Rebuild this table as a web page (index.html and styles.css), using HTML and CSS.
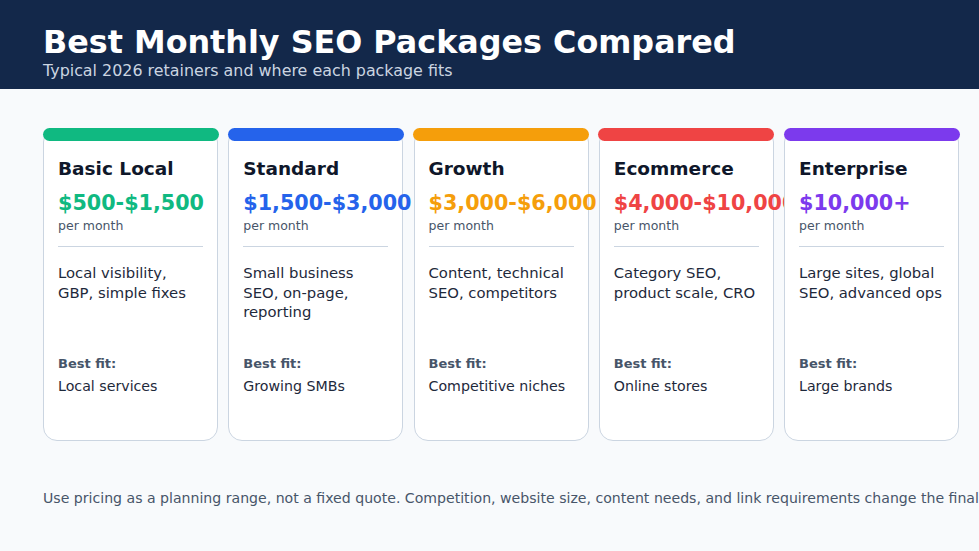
FILE: index.html
```html
<!DOCTYPE html>
<html lang="en">
<head>
<meta charset="utf-8">
<title>Best Monthly SEO Packages Compared</title>
<link rel="stylesheet" href="styles.css">
</head>
<body>
<header class="hero">
  <h1 class="hero-title">Best Monthly SEO Packages Compared</h1>
  <p class="hero-sub">Typical 2026 retainers and where each package fits</p>
</header>
<main class="content">
  <section class="cards">
    <article class="card card-green">
      <div class="card-bar"></div>
      <h2 class="card-title">Basic Local</h2>
      <div class="card-price">$500-$1,500</div>
      <div class="card-period">per month</div>
      <hr class="card-rule">
      <p class="card-desc">Local visibility,<br>GBP, simple fixes</p>
      <div class="card-fit-label">Best fit:</div>
      <div class="card-fit">Local services</div>
    </article>
    <article class="card card-blue">
      <div class="card-bar"></div>
      <h2 class="card-title">Standard</h2>
      <div class="card-price">$1,500-$3,000</div>
      <div class="card-period">per month</div>
      <hr class="card-rule">
      <p class="card-desc">Small business<br>SEO, on-page,<br>reporting</p>
      <div class="card-fit-label">Best fit:</div>
      <div class="card-fit">Growing SMBs</div>
    </article>
    <article class="card card-orange">
      <div class="card-bar"></div>
      <h2 class="card-title">Growth</h2>
      <div class="card-price">$3,000-$6,000</div>
      <div class="card-period">per month</div>
      <hr class="card-rule">
      <p class="card-desc">Content, technical<br>SEO, competitors</p>
      <div class="card-fit-label">Best fit:</div>
      <div class="card-fit">Competitive niches</div>
    </article>
    <article class="card card-red">
      <div class="card-bar"></div>
      <h2 class="card-title">Ecommerce</h2>
      <div class="card-price">$4,000-$10,000</div>
      <div class="card-period">per month</div>
      <hr class="card-rule">
      <p class="card-desc">Category SEO,<br>product scale, CRO</p>
      <div class="card-fit-label">Best fit:</div>
      <div class="card-fit">Online stores</div>
    </article>
    <article class="card card-purple">
      <div class="card-bar"></div>
      <h2 class="card-title">Enterprise</h2>
      <div class="card-price">$10,000+</div>
      <div class="card-period">per month</div>
      <hr class="card-rule">
      <p class="card-desc">Large sites, global<br>SEO, advanced ops</p>
      <div class="card-fit-label">Best fit:</div>
      <div class="card-fit">Large brands</div>
    </article>
  </section>
  <p class="note">Use pricing as a planning range, not a fixed quote. Competition, website size, content needs, and link requirements change the final quote.</p>
</main>
</body>
</html>
```

FILE: styles.css
```css
html, body {
  margin: 0;
  padding: 0;
  overflow: hidden;
  width: 979px;
  height: 551px;
}
body {
  background: #f8fafc;
  font-family: "DejaVu Sans", "Noto Sans", sans-serif;
  color: #0f172a;
}
.hero {
  background: #13284a;
  height: 89px;
  box-sizing: border-box;
  padding: 23px 43px 0;
}
.hero-title {
  margin: 0;
  font-size: 31.8px;
  line-height: 38px;
  font-weight: bold;
  color: #ffffff;
  white-space: nowrap;
}
.hero-sub {
  margin: 0;
  font-size: 15.9px;
  line-height: 20px;
  color: #cbd5e1;
  white-space: nowrap;
}
.content {
  padding: 39px 0 0 43px;
}
.cards {
  display: grid;
  grid-template-columns: repeat(5, 175px);
  column-gap: 10.25px;
}
.card {
  position: relative;
  height: 313px;
  box-sizing: border-box;
  background: #ffffff;
  border: 1.5px solid #cbd5e1;
  border-radius: 14px;
  padding: 0 14px;
}
.card-bar {
  margin: -1.5px -15.5px 0;
  height: 13px;
  border-radius: 7px;
}
.card-green .card-bar { background: #10b981; }
.card-blue .card-bar { background: #2563eb; }
.card-orange .card-bar { background: #f59e0b; }
.card-red .card-bar { background: #ef4444; }
.card-purple .card-bar { background: #7c3aed; }
.card-green .card-price { color: #10b981; }
.card-blue .card-price { color: #2563eb; }
.card-orange .card-price { color: #f59e0b; }
.card-red .card-price { color: #ef4444; }
.card-purple .card-price { color: #7c3aed; }
.card-title {
  margin: 16px 0 0;
  font-size: 18.5px;
  line-height: 24px;
  font-weight: bold;
  color: #0f172a;
  white-space: nowrap;
}
.card-price {
  margin-top: 9px;
  font-size: 20.7px;
  line-height: 26px;
  font-weight: bold;
  white-space: nowrap;
}
.card-period {
  margin-top: 2px;
  font-size: 12.5px;
  line-height: 16px;
  color: #475569;
}
.card-rule {
  margin: 12px 0 0;
  border: 0;
  height: 1.5px;
  background: #cbd5e1;
}
.card-desc {
  margin: 16px 0 0;
  height: 92.5px;
  font-size: 14.8px;
  line-height: 19.5px;
  color: #1e293b;
  white-space: nowrap;
}
.card-fit-label {
  font-size: 13px;
  line-height: 16px;
  font-weight: bold;
  color: #475569;
}
.card-fit {
  margin-top: 4px;
  font-size: 14.2px;
  line-height: 20px;
  color: #1e293b;
  white-space: nowrap;
}
.note {
  margin: 47px 0 0;
  font-size: 14.1px;
  line-height: 20px;
  color: #475569;
  white-space: nowrap;
}
```
